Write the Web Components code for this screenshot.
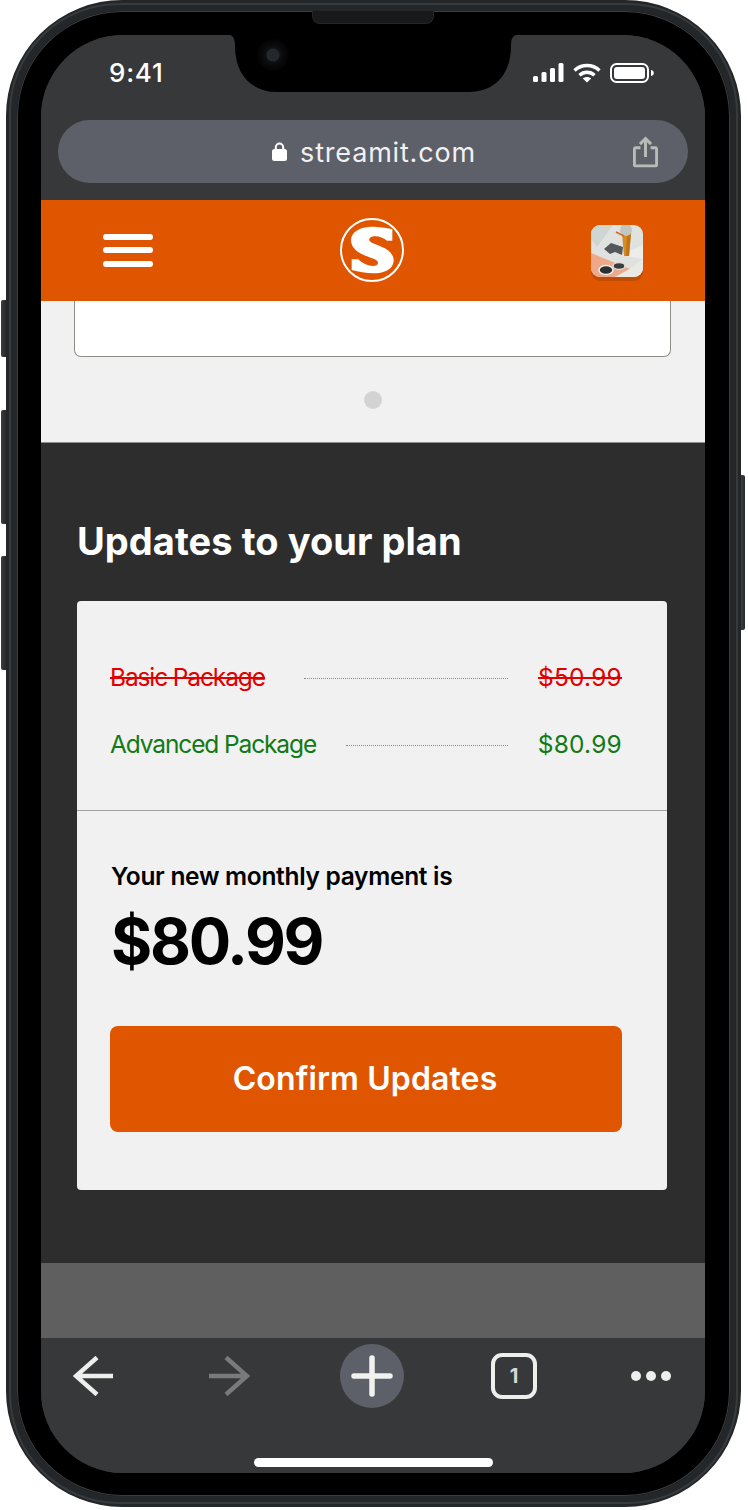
<!DOCTYPE html>
<html>
<head>
<meta charset="utf-8">
<style>
  html,body{margin:0;background:#fff;font-family:Inter,"Liberation Sans",sans-serif;}
  body{width:748px;height:1510px;overflow:hidden;}
</style>
</head>
<body>
<phone-frame>
  <browser-top url="streamit.com"></browser-top>
  <site-header></site-header>
  <carousel-stub></carousel-stub>
  <plan-updates heading="Updates to your plan">
    <price-row kind="old" label="Basic Package" price="$50.99" style="--gap:39px"></price-row>
    <price-row kind="new" label="Advanced Package" price="$80.99" style="--gap:30px"></price-row>
  </plan-updates>
  <footer-band></footer-band>
  <browser-bar></browser-bar>
</phone-frame>

<script>
function define(name, html) {
  customElements.define(name, class extends HTMLElement {
    constructor() {
      super();
      this.attachShadow({ mode: 'open' });
      this.shadowRoot.innerHTML = typeof html === 'function' ? html(this) : html;
    }
  });
}

define('phone-frame', `
  <style>
    :host{display:block;position:relative;width:735px;height:1507px;margin-left:6px;}
    .body{
      box-sizing:border-box;width:100%;height:100%;
      padding:24px 25px 23px 24px;
      border:11px solid #24272a;border-radius:116px;
      background:#000;
      box-shadow:0 0 0 1px #3a3d40 inset, inset 0 0 0 1px #1c1e20;
      position:relative;
    }
    .body::before{
      content:'';position:absolute;inset:-8px;border:2px solid #383b3e;border-radius:110px;pointer-events:none;
    }
    .screen{
      width:664px;height:1438px;overflow:hidden;border-radius:82px;
      display:flex;flex-direction:column;background:#37383a;
    }
    .btn{position:absolute;background:linear-gradient(90deg,#3c3f42,#26292c);}
    .l{left:-5px;width:5px;border-radius:2px 0 0 2px;}
    .r{right:-4px;width:4px;top:475px;height:155px;border-radius:0 2px 2px 0;}
    .notch{position:absolute;left:219px;top:34px;display:block;}
    .speaker{position:absolute;left:306px;top:11px;width:122px;height:13px;box-sizing:border-box;
      border-radius:0 0 8px 8px;background:#17191b;border:1px solid #26282b;border-top:0;}
    .cam{position:absolute;left:251px;top:39px;width:32px;height:32px;border-radius:50%;
      background:radial-gradient(circle,#23282c 0 6px,#0e1012 7px,#08090b 11px,#030304 16px);}
  </style>
  <i class="btn l" style="top:300px;height:57px"></i>
  <i class="btn l" style="top:410px;height:114px"></i>
  <i class="btn l" style="top:556px;height:114px"></i>
  <i class="btn r"></i>
  <div class="body"><div class="screen"><slot></slot></div></div>
  <svg class="notch" width="296" height="60" viewBox="0 0 296 60">
    <path fill="#000" d="M0 0H296C288 0 286 4 286 12C286 40 270 58 244 58H52C26 58 10 40 10 12C10 4 8 0 0 0Z"/>
  </svg>
  <i class="speaker"></i>
  <i class="cam"></i>
`);

define('browser-top', (el) => `
  <style>
    :host{display:block;height:165px;background:#37383a;color:#fff;flex:none;}
    .status{height:85px;box-sizing:border-box;padding:24px 51px 0 68px;display:flex;justify-content:space-between;align-items:flex-start;}
    .time{font-size:26px;font-weight:500;line-height:28px;letter-spacing:.8px;}
    .icons{display:flex;gap:9px;align-items:center;margin-top:4px;}
    svg{display:block;}
    .url{
      margin:0 17px;height:63px;border-radius:32px;background:#5d6068;
      display:flex;align-items:center;justify-content:center;position:relative;
    }
    .lock{margin-right:13px;margin-left:2px;}
    .text{font-size:27px;letter-spacing:.82px;color:#f1f1f1;line-height:63px;padding-top:2px;}
    .share{position:absolute;right:30px;top:16px;}
  </style>
  <div class="status">
    <span class="time">9:41</span>
    <div class="icons">
      <svg width="31" height="20" viewBox="0 0 31 20" fill="#fff">
        <rect x="0" y="13" width="5" height="6" rx="1.5"/><rect x="8.5" y="9" width="5" height="10" rx="1.5"/>
        <rect x="17" y="5" width="5" height="14" rx="1.5"/><rect x="25.500" y="0" width="5" height="19" rx="1.5"/>
      </svg>
      <svg width="28" height="20" viewBox="0 0 28 20" fill="none" stroke="#fff" stroke-width="3.4">
        <path d="M1.500 7.500C8.500 .8 19.500 .8 26.500 7.500"/><path d="M6.500 12.200C10.800 8.200 17.200 8.200 21.500 12.200"/>
        <path d="M14 19.500L9.800 15.500C12.200 13.500 15.800 13.500 18.200 15.500Z" fill="#fff" stroke="none"/>
      </svg>
      <svg width="44" height="20" viewBox="0 0 44 20" fill="none">
        <rect x="1" y="1" width="37" height="18" rx="5.500" stroke="#fff" stroke-width="2"/>
        <rect x="4" y="4" width="31" height="12" rx="3" fill="#fff"/>
        <path d="M41 7c2 .4 2.800 1.500 2.800 3s-.8 2.600-2.800 3z" fill="#fff"/>
      </svg>
    </div>
  </div>
  <div class="url">
    <svg class="lock" width="15" height="19" viewBox="0 0 15 19">
      <path d="M3.800 8V5.200a3.700 3.700 0 0 1 7.400 0V8" fill="none" stroke="#fff" stroke-width="2"/>
      <rect x="0" y="7" width="15" height="12" rx="2.500" fill="#fff"/>
    </svg>
    <span class="text">${el.getAttribute('url')}</span>
    <svg class="share" width="25" height="32" viewBox="0 0 27 33" fill="none" stroke="#b9bcb6" stroke-width="3.2">
      <path d="M8 12H3a1.500 1.500 0 0 0-1.500 1.500V30a1.500 1.500 0 0 0 1.500 1.500H24a1.500 1.500 0 0 0 1.500-1.500V13.500A1.500 1.500 0 0 0 24 12H19"/>
      <path d="M13.500 22V2.500M7.500 8l6-6 6 6"/>
    </svg>
  </div>
`);

define('site-header', `
  <style>
    :host{display:flex;height:101px;flex:none;box-sizing:border-box;padding:0 62px 1px;background:#e05600;align-items:center;justify-content:space-between;}
    svg{display:block;}
    .ham{display:flex;flex-direction:column;gap:7.500px;width:50px;}
    .ham i{display:block;height:6px;border-radius:3px;background:#fff;}
    .avatar{width:52px;height:52px;border-radius:9px;overflow:hidden;box-shadow:0 4px 0 #c04c05;margin-top:2px;}
  </style>
  <div class="ham"><i></i><i></i><i></i></div>
  <svg width="66" height="66" viewBox="26 23 198 198">
    <circle cx="125" cy="122" r="93" fill="none" stroke="#fff" stroke-width="6"/>
    <path fill="#fff" d="M125 52C142 52 168 55 186 60V94H170C158 84 142 79 130 81C116 83 112 92 122 99C136 108 192 118 190 155C188 182 160 192 128 192C108 192 85 187 64 182V150H84C96 162 112 170 128 170C144 170 148 158 136 151C118 142 62 132 62 92C62 68 90 52 125 52Z"/>
  </svg>
  <div class="avatar">
    <svg width="52" height="52" viewBox="0 0 52 52">
      <rect width="52" height="52" fill="#dfe2de"/>
      <path d="M0 0H22L6 22 0 14Z" fill="#cfd6d2"/><path d="M30 30L52 20V34Z" fill="#ecedea"/>
      <path d="M0 28L39 44 24 52H0Z" fill="#eea98b"/><path d="M39 44L52 34V52H24Z" fill="#e9e9e6"/>
      <path d="M13 24L20 18 32 22 31 30 24 27 19 29Z" fill="#55585a"/>
      <path d="M31 8H40L38 31H33Z" fill="#d98a22"/><path d="M36 8H40L38 31H35Z" fill="#c07418"/>
      <circle cx="35" cy="5" r="6" fill="#c2c6c1"/><path d="M25 7L33 11" stroke="#d0662a" stroke-width="1.500"/>
      <ellipse cx="15" cy="45" rx="7" ry="4.500" fill="#2d2f31" stroke="#eee" stroke-width="1.500"/>
      <ellipse cx="28" cy="41" rx="6" ry="3.500" fill="#3a3c3e" stroke="#ddd" stroke-width="1.500"/>
    </svg>
  </div>
`);

define('carousel-stub', `
  <style>
    :host{display:block;height:142px;flex:none;box-sizing:border-box;background:#f1f1f1;border-bottom:1px solid #8f8f8b;}
    .panel{box-sizing:border-box;height:56px;margin:0 34px 0 33px;background:#fff;border:1px solid #8e8e88;border-top:0;border-radius:0 0 7px 7px;}
    .dots{display:flex;justify-content:center;margin-top:34px;padding-right:0;}
    .dots i{display:block;width:18px;height:18px;border-radius:50%;background:#d3d3d3;}
  </style>
  <div class="panel"></div>
  <div class="dots"><i></i></div>
`);

define('plan-updates', (el) => `
  <style>
    :host{display:block;height:820px;flex:none;box-sizing:border-box;background:#2c2d2c;padding:74px 38px 0 36px;}
    h2{margin:0 0 36px 0;font-size:38px;line-height:48px;font-weight:700;color:#fff;letter-spacing:.05px;}
    .card{background:#f1f1f1;border-radius:4px;height:589px;}
    .rows{box-sizing:border-box;height:210px;padding:52px 45px 0 33px;border-bottom:1px solid #a2a2a0;display:flex;flex-direction:column;gap:19px;}
    .total{padding:47px 45px 0 33px;}
    .lead{margin:0 0 0 1px;font-size:24.5px;line-height:36px;font-weight:600;color:#000;letter-spacing:-.3px;}
    .amount{margin:11px 0 0 1px;font-size:63px;line-height:72px;font-weight:700;color:#000;letter-spacing:-2.3px;}
    button{
      display:block;width:100%;height:106px;margin-top:49px;border:0;border-radius:8px;
      background:#e05600;color:#fff;font:600 32px/106px Inter,"Liberation Sans",sans-serif;letter-spacing:.12px;padding:0 2px 0 0;
    }
  </style>
  <h2>${el.getAttribute('heading')}</h2>
  <div class="card">
    <div class="rows"><slot></slot></div>
    <div class="total">
      <p class="lead">Your new monthly payment is</p>
      <p class="amount">$80.99</p>
      <button>Confirm Updates</button>
    </div>
  </div>
`);

define('price-row', (el) => `
  <style>
    :host{display:flex;align-items:center;height:48px;font-size:24.5px;line-height:48px;}
    .old{color:#e00000;text-decoration:line-through;}
    .new{color:#117a14;}
    .label{letter-spacing:-1.12px;}
    .price{letter-spacing:.2px;}
    .dotted{flex:1;height:0;border-top:1px dotted #8a8a8a;margin:2px 30px 0 var(--gap);}
  </style>
  <span class="label ${el.getAttribute('kind')}">${el.getAttribute('label')}</span>
  <i class="dotted"></i>
  <span class="price ${el.getAttribute('kind')}">${el.getAttribute('price')}</span>
`);

define('footer-band', `
  <style>:host{display:block;height:75px;flex:none;background:#5f5f5f;}</style>
`);

define('browser-bar', `
  <style>
    :host{display:block;height:135px;flex:none;background:#37383a;}
    .tools{display:flex;align-items:center;padding:6px 0 0 32px;height:64px;}
    svg{display:block;}
    .fwd{margin-left:95px;}
    .plus{margin-left:90px;width:64px;height:64px;border-radius:50%;background:#5d6068;display:flex;align-items:center;justify-content:center;}
    .tabs{margin-left:87px;box-sizing:border-box;width:46px;height:46px;border:4px solid #eeeeec;border-radius:11px;
      display:flex;align-items:center;justify-content:center;color:#d8d8d6;font-size:20px;font-weight:700;line-height:1;}
    .more{margin-left:94px;display:flex;gap:5px;}
    .more i{display:block;width:10px;height:10px;border-radius:50%;background:#eeeeec;}
    .home{width:239px;height:9px;border-radius:5px;background:#fff;margin:50px auto 0;}
  </style>
  <div class="tools">
    <svg width="41" height="40" viewBox="0 0 41 40" fill="none" stroke="#eeeeec" stroke-width="4.500">
      <path d="M40 20H3M24 1.500 3 20 24 38.500"/>
    </svg>
    <svg class="fwd" width="41" height="40" viewBox="0 0 41 40" fill="none" stroke="#7a7a7a" stroke-width="4.500">
      <path d="M0 20H38M17 1.500 38 20 17 38.500"/>
    </svg>
    <div class="plus">
      <svg width="42" height="42" viewBox="0 0 42 42" stroke="#f1f1ef" stroke-width="5.500" stroke-linecap="round">
        <path d="M3 21H39M21 3V39"/>
      </svg>
    </div>
    <div class="tabs">1</div>
    <div class="more"><i></i><i></i><i></i></div>
  </div>
  <div class="home"></div>
`);
</script>
</body>
</html>
